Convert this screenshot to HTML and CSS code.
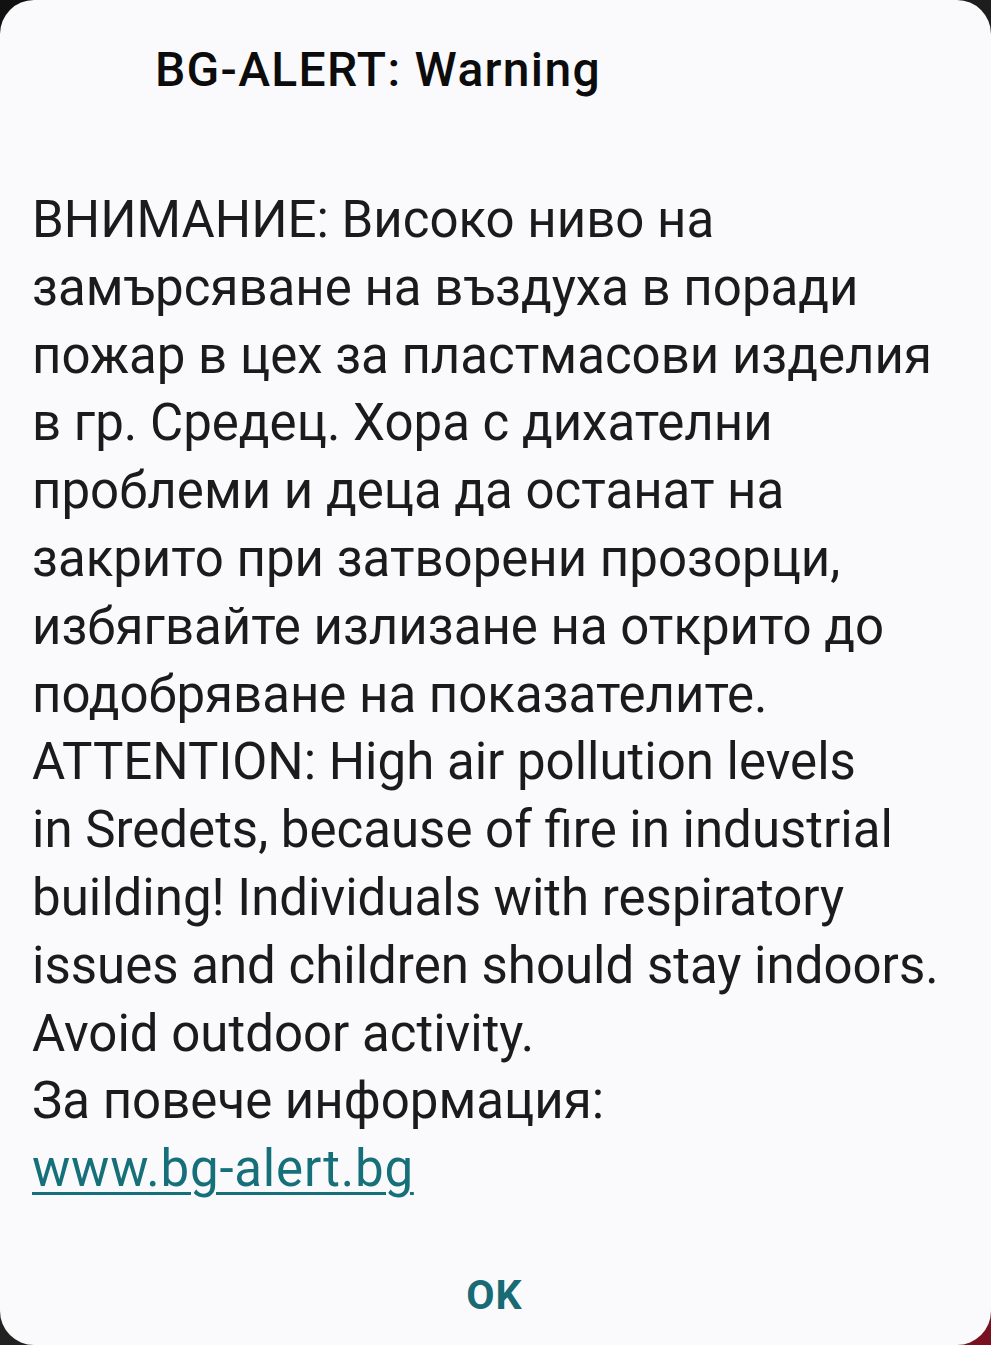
FILE: index.html
```html
<!DOCTYPE html>
<html lang="bg">
<head>
<meta charset="utf-8">
<link rel="stylesheet" href="styles.css">
</head>
<body>
<div class="backdrop">
  <div class="dialog">
    <h1 class="title">BG-ALERT: Warning</h1>
    <div class="message">
      <span class="line">ВНИМАНИЕ: Високо ниво на</span>
      <span class="line">замърсяване на въздуха в поради</span>
      <span class="line">пожар в цех за пластмасови изделия</span>
      <span class="line">в гр. Средец. Хора с дихателни</span>
      <span class="line">проблеми и деца да останат на</span>
      <span class="line">закрито при затворени прозорци,</span>
      <span class="line">избягвайте излизане на открито до</span>
      <span class="line">подобряване на показателите.</span>
      <span class="line">ATTENTION: High air pollution levels</span>
      <span class="line">in Sredets, because of fire in industrial</span>
      <span class="line">building! Individuals with respiratory</span>
      <span class="line">issues and children should stay indoors.</span>
      <span class="line">Avoid outdoor activity.</span>
      <span class="line">За повече информация:</span>
      <span class="line"><a class="link" href="#">www.bg-alert.bg</a></span>
    </div>
    <div class="actions">
      <button class="ok">OK</button>
    </div>
  </div>
</div>
</body>
</html>
```
FILE: styles.css
```css
html, body {
  margin: 0;
  padding: 0;
  background: #1a1414;
}
.backdrop {
  width: 991px;
  height: 1345px;
  background: linear-gradient(135deg, #111 0%, #222 60%, #7a1020 100%);
}
.dialog {
  width: 991px;
  height: 1345px;
  box-sizing: border-box;
  background: #fafafc;
  border-radius: 34px;
  padding: 40px 0 0 32px;
  display: flex;
  flex-direction: column;
  font-family: Roboto, "Noto Sans", sans-serif;
  color: #111;
}
.title {
  margin: 0 0 0 123px;
  font-size: 48px;
  font-weight: 500;
  letter-spacing: 1.3px;
  line-height: 60px;
  color: #0c0c0c;
}
.message {
  margin-top: 86px;
  font-size: 51px;
  line-height: 67.8px;
  color: #1b1b1b;
}
.line {
  display: block;
  white-space: nowrap;
}
.link {
  color: #16707a;
  letter-spacing: 0.8px;
  text-decoration: underline;
  text-decoration-thickness: 3px;
  text-underline-offset: 6px;
}
.actions {
  display: flex;
  justify-content: center;
  margin-top: 68px;
  padding-right: 34px;
}
.ok {
  background: none;
  border: none;
  font-family: Roboto, "Noto Sans", sans-serif;
  font-size: 41px;
  font-weight: 700;
  letter-spacing: 1px;
  color: #186a75;
  padding: 0;
}
```
